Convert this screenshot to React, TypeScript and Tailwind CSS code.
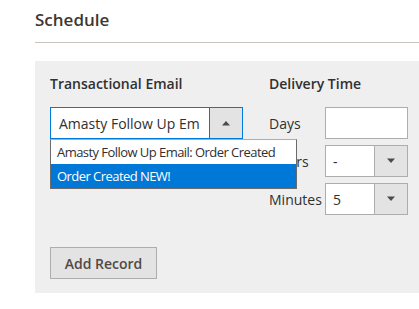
import React from 'react';

const Caret = ({ up = false }: { up?: boolean }) => (
  <svg width="10" height="6" viewBox="0 0 10 6" className="block">
    {up ? (
      <polygon points="1,5.5 9,5.5 5,1" fill="#514943" />
    ) : (
      <polygon points="1,0.5 9,0.5 5,5" fill="#514943" />
    )}
  </svg>
);

const SmallSelect = ({ value }: { value: string }) => (
  <div className="flex h-8 w-[83px] border border-[#adadad] bg-white">
    <div className="flex flex-1 items-center pl-[7px] text-[14px] text-[#303030]">
      {value}
    </div>
    <div className="flex w-[33px] items-center justify-center border-l border-[#adadad] bg-[#e3e3e3]">
      <Caret />
    </div>
  </div>
);

export default function App() {
  return (
    <div
      className="w-[419px] h-[309px] overflow-hidden bg-white pl-[35px]"
      style={{ fontFamily: '"Open Sans", "Noto Sans", sans-serif' }}
    >
      <h2 className="pt-2 h-[42px] text-[17px] font-semibold leading-6 text-[#41362f]">
        Schedule
      </h2>
      <div className="h-px bg-[#ccc4bc]" />

      <div className="mt-[18px] w-[420px] bg-[#efefef] pl-[15px] pt-[13px] pb-[14px]">
        <div className="flex">
          <div className="relative w-[193px]">
            <div className="h-5 text-[14px] font-semibold leading-5 text-[#303030]">
              Transactional Email
            </div>
            <div className="mt-[13px] flex h-8 border border-[#007bdb] bg-white">
              <div className="flex flex-1 items-center overflow-hidden whitespace-nowrap pl-2 text-[14px] text-[#303030]">
                Amasty Follow Up Em
              </div>
              <div className="flex w-[33px] items-center justify-center border-l border-[#007bdb] bg-[#e3e3e3]">
                <Caret up />
              </div>
            </div>
            <div className="absolute left-0 top-[65px] z-10 w-[247px] border border-[#6b6b6b] border-t-[#adadad] bg-white text-[13px] leading-6 tracking-[-0.55px] whitespace-nowrap">
              <div className="h-6 pl-[6px] text-[#303030]">
                Amasty Follow Up Email: Order Created
              </div>
              <div className="h-6 bg-[#0078d7] pl-[6px] text-white">
                Order Created NEW!
              </div>
            </div>
          </div>

          <div className="ml-[26px]">
            <div className="h-5 text-[14px] font-semibold leading-5 text-[#303030]">
              Delivery Time
            </div>
            <div className="mt-[13px] flex flex-col gap-[6px]">
              <div className="flex items-center">
                <div className="w-14 text-[14px] text-[#303030]">Days</div>
                <div className="h-8 w-[83px] border border-[#adadad] bg-white" />
              </div>
              <div className="flex items-center">
                <div className="w-14 text-[14px] text-[#303030]">Hours</div>
                <SmallSelect value="-" />
              </div>
              <div className="flex items-center">
                <div className="w-14 text-[14px] text-[#303030]">Minutes</div>
                <SmallSelect value="5" />
              </div>
            </div>
          </div>
        </div>

        <button className="mt-8 h-8 w-[107px] border border-[#adadad] bg-[#e3e3e3] text-[14px] font-semibold text-[#514943]">
          Add Record
        </button>
      </div>
    </div>
  );
}
